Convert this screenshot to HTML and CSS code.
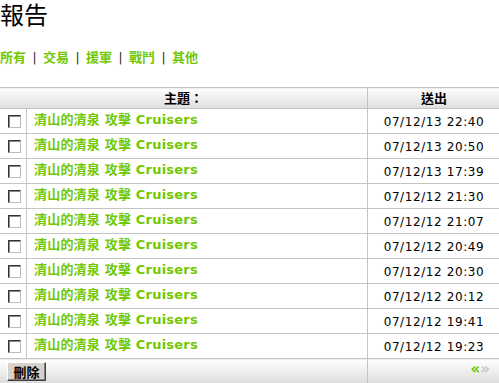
FILE: index.html
```html
<!DOCTYPE html>
<html lang="zh-Hant">
<head>
<meta charset="utf-8">
<title>報告</title>
<link rel="stylesheet" href="styles.css">
</head>
<body>
<h1 class="title">報告</h1>
<p class="nav"><a href="#">所有</a><span class="sep">|</span><a href="#">交易</a><span class="sep">|</span><a href="#">援軍</a><span class="sep">|</span><a href="#">戰鬥</a><span class="sep">|</span><a href="#">其他</a></p>
<table class="reports">
  <colgroup><col class="c-sel"><col class="c-sub"><col class="c-dat"></colgroup>
  <thead>
    <tr><th colspan="2" class="h-subject"><div class="cell">主題：</div></th><th class="h-sent"><div class="cell">送出</div></th></tr>
  </thead>
  <tbody>
    <tr><td class="sel"><div class="cell"><span class="cb"></span></div></td><td class="sub"><div class="cell"><a href="#">清山的清泉 攻擊 Cruisers</a></div></td><td class="dat"><div class="cell">07/12/13 22:40</div></td></tr>
    <tr><td class="sel"><div class="cell"><span class="cb"></span></div></td><td class="sub"><div class="cell"><a href="#">清山的清泉 攻擊 Cruisers</a></div></td><td class="dat"><div class="cell">07/12/13 20:50</div></td></tr>
    <tr><td class="sel"><div class="cell"><span class="cb"></span></div></td><td class="sub"><div class="cell"><a href="#">清山的清泉 攻擊 Cruisers</a></div></td><td class="dat"><div class="cell">07/12/13 17:39</div></td></tr>
    <tr><td class="sel"><div class="cell"><span class="cb"></span></div></td><td class="sub"><div class="cell"><a href="#">清山的清泉 攻擊 Cruisers</a></div></td><td class="dat"><div class="cell">07/12/12 21:30</div></td></tr>
    <tr><td class="sel"><div class="cell"><span class="cb"></span></div></td><td class="sub"><div class="cell"><a href="#">清山的清泉 攻擊 Cruisers</a></div></td><td class="dat"><div class="cell">07/12/12 21:07</div></td></tr>
    <tr><td class="sel"><div class="cell"><span class="cb"></span></div></td><td class="sub"><div class="cell"><a href="#">清山的清泉 攻擊 Cruisers</a></div></td><td class="dat"><div class="cell">07/12/12 20:49</div></td></tr>
    <tr><td class="sel"><div class="cell"><span class="cb"></span></div></td><td class="sub"><div class="cell"><a href="#">清山的清泉 攻擊 Cruisers</a></div></td><td class="dat"><div class="cell">07/12/12 20:30</div></td></tr>
    <tr><td class="sel"><div class="cell"><span class="cb"></span></div></td><td class="sub"><div class="cell"><a href="#">清山的清泉 攻擊 Cruisers</a></div></td><td class="dat"><div class="cell">07/12/12 20:12</div></td></tr>
    <tr><td class="sel"><div class="cell"><span class="cb"></span></div></td><td class="sub"><div class="cell"><a href="#">清山的清泉 攻擊 Cruisers</a></div></td><td class="dat"><div class="cell">07/12/12 19:41</div></td></tr>
    <tr><td class="sel"><div class="cell"><span class="cb"></span></div></td><td class="sub"><div class="cell"><a href="#">清山的清泉 攻擊 Cruisers</a></div></td><td class="dat"><div class="cell">07/12/12 19:23</div></td></tr>
  </tbody>
  <tfoot>
    <tr><td colspan="2" class="f-left"><div class="cell foot"><button class="del" type="button">刪除</button></div></td><td class="f-right"><div class="cell foot"><span class="prev">«</span><span class="next">»</span></div></td></tr>
  </tfoot>
</table>
</body>
</html>
```
FILE: styles.css
```css
html, body {
  margin: 0;
  padding: 0;
  background: #fff;
  color: #000;
  font-family: "DejaVu Sans", Verdana, "Noto Sans CJK TC", sans-serif;
  font-size: 12px;
}
a {
  color: #71C800;
  text-decoration: none;
  font-weight: bold;
}
.title {
  margin: 0;
  height: 48px;
  font-family: "Noto Sans CJK TC", sans-serif;
  font-weight: normal;
  font-size: 24px;
  line-height: 30px;
  margin-top: -1px;
  padding-top: 0;
}
.nav {
  margin: 0;
  height: 40px;
  font-family: "Noto Sans CJK TC", sans-serif;
  font-size: 13px;
  line-height: 20px;
  white-space: nowrap;
}
.sep {
  display: inline-block;
  width: 17px;
  text-align: center;
  font-family: "DejaVu Sans", sans-serif;
  font-size: 12px;
  color: #222;
}
.reports {
  border-collapse: collapse;
  margin-left: -1px;
  width: 502px;
  table-layout: fixed;
}
.c-sel { width: 27px; }
.c-dat { width: 133px; }
.reports th, .reports td {
  border: 1px solid #c4c4c4;
  padding: 0;
  vertical-align: top;
}
.cell {
  height: 24px;
  overflow: hidden;
  white-space: nowrap;
}
.reports thead .cell {
  height: 20px;
  line-height: 20px;
}
.reports thead th {
  background: linear-gradient(#ffffff, #f1f1f1 40%, #dedede);
  font-family: "Noto Sans CJK TC", sans-serif;
  font-size: 13px;
  font-weight: bold;
  text-align: center;
}
.sel { text-align: center; }
.cb {
  display: inline-block;
  width: 11px;
  height: 11px;
  margin-top: 6px;
  margin-left: 2px;
  border: 1px solid;
  border-color: #333 #bbb #bbb #333;
  background: #fff;
  box-shadow: inset 1px 1px 0 #888;
  vertical-align: top;
}
.sub .cell {
  padding-left: 7px;
  font-size: 13px;
  line-height: 22px;
  letter-spacing: 0.2px;
}
.dat .cell {
  text-align: center;
  font-size: 12px;
  letter-spacing: 0.6px;
  line-height: 26px;
}
.reports tfoot td {
  background: linear-gradient(#ffffff, #f2f2f2 40%, #dcdcdc);
}
.f-left .cell { padding-left: 7px; }
.del {
  display: block;
  width: 39px;
  height: 19px;
  margin: 3px 0 0 0;
  padding: 0;
  background: #d6d3ce;
  border: 1px solid;
  border-color: #fff #404040 #404040 #fff;
  box-shadow: inset -1px -1px 0 #808080;
  font-family: "Noto Sans CJK TC", sans-serif;
  font-size: 13px;
  font-weight: bold;
  line-height: 15px;
  color: #000;
}
.f-right .cell {
  text-align: right;
  padding-right: 10px;
  font-size: 15px;
  font-weight: bold;
  line-height: 20px;
}
.prev { color: #71C800; }
.next { color: #c8c8c8; }
```
